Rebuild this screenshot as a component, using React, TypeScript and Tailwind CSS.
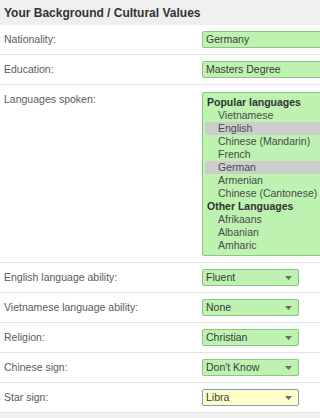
const LANGS = [
  { group: 'Popular languages', items: ['Vietnamese', 'English', 'Chinese (Mandarin)', 'French', 'German', 'Armenian', 'Chinese (Cantonese)'] },
  { group: 'Other Languages', items: ['Afrikaans', 'Albanian', 'Amharic'] },
]
const SELECTED = ['English', 'German']

const SELECTS = [
  { label: 'English language ability:', value: 'Fluent' },
  { label: 'Vietnamese language ability:', value: 'None' },
  { label: 'Religion:', value: 'Christian' },
  { label: 'Chinese sign:', value: "Don't Know" },
  { label: 'Star sign:', value: 'Libra', focus: true },
]

function Arrow() {
  return (
    <svg width="7" height="4" viewBox="0 0 7 4" className="mr-[6px]">
      <path d="M0 0h7L3.5 4z" fill="#6b6b6b" />
    </svg>
  )
}

export default function App() {
  return (
    <div className="w-[320px] h-[418px] overflow-hidden bg-white text-[10.5px] text-[#5a5a5a] flex flex-col" style={{ fontFamily: '"Liberation Sans", Arial, sans-serif' }}>
      {/* Header */}
      <div className="h-[25px] shrink-0 bg-[#efefef] flex items-center px-1">
        <span className="text-[12px] font-bold text-[#333]">Your Background / Cultural Values</span>
      </div>

      {/* Text fields */}
      {[['Nationality:', 'Germany'], ['Education:', 'Masters Degree']].map(([label, value]) => (
        <div key={label} className="h-[30px] shrink-0 flex items-center border-b border-[#e4e4e4]">
          <div className="w-[202px] shrink-0 pl-1">{label}</div>
          <div className="w-[150px] shrink-0 h-[17px] rounded-[2px] border border-[#8cc684] bg-[#bdf2b1] text-[#3a3a3a] flex items-center pl-[3px]">
            {value}
          </div>
        </div>
      ))}

      {/* Languages */}
      <div className="h-[178px] shrink-0 flex pt-[7px] border-b border-[#e4e4e4]">
        <div className="w-[202px] shrink-0 pl-1 leading-[13px] pt-px">Languages spoken:</div>
        <div className="w-[150px] shrink-0 h-[164px] rounded-[2px] border border-[#8cc684] bg-[#bdf2b1] py-[3px] px-[2px] leading-[13px]">
          {LANGS.map(({ group, items }) => (
            <div key={group}>
              <div className="font-bold text-[#333] pl-[2px]">{group}</div>
              {items.map(item => (
                <div key={item} className={`pl-[13px] ${SELECTED.includes(item) ? 'bg-[#cdcdcd]' : ''} text-[#4a4a4a]`}>
                  {item}
                </div>
              ))}
            </div>
          ))}
        </div>
      </div>

      {/* Selects */}
      {SELECTS.map(({ label, value, focus }) => (
        <div key={label} className="h-[30px] shrink-0 flex items-center border-b border-[#e4e4e4]">
          <div className="w-[202px] shrink-0 pl-1">{label}</div>
          <div className={`w-[97px] shrink-0 h-[17px] rounded-[2px] border flex items-center justify-between pl-[3px] text-[#3a3a3a] ${
            focus ? 'border-[#7d9cc0] bg-[#ffffca]' : 'border-[#8cc684] bg-[#bdf2b1]'
          }`}>
            <span>{value}</span>
            <Arrow />
          </div>
        </div>
      ))}

      {/* Footer */}
      <div className="flex-1 bg-[#efefef]" />
    </div>
  )
}
